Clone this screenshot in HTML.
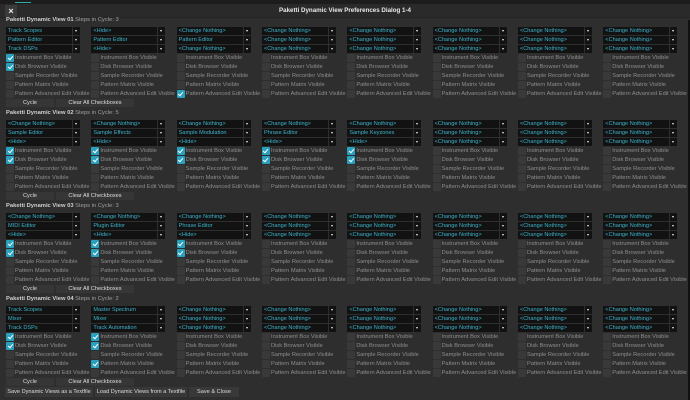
<!DOCTYPE html><html><head><meta charset="utf-8"><style>
*{margin:0;padding:0;box-sizing:border-box}
body{width:690px;height:400px;background:#2e2e2e;font-family:"Liberation Sans",sans-serif;position:relative;overflow:hidden}
.top{position:absolute;left:0;top:0;width:690px;height:4px;background:#1c1c1c}
.top:after{content:"";position:absolute;left:15px;top:2px;width:16px;height:1px;background:#3aa}
.tb{position:absolute;left:0;top:4px;width:690px;height:14px;background:#2a2a2a;border-bottom:1px solid #242424}
.x{position:absolute;left:5px;top:5px;width:12px;height:12px;background:#3a3a3a;color:#eee;font-size:9px;line-height:12px;text-align:center;font-weight:bold}
.ttl{position:absolute;left:0;top:7px;width:690px;text-align:center;color:#e8e8e8;font-size:6.2px;font-weight:bold}
.re{position:absolute;right:0;top:20px;width:2px;height:380px;background:#111}
.s{position:absolute;left:6px;width:684px}
.t{height:11px;line-height:9px;font-size:5.8px;color:#a0a0a0;white-space:nowrap}
.t b{color:#cfcfcf}
.g{display:grid;grid-template-columns:repeat(8,85.33px)}
.col{display:flex;flex-direction:column}
.d{display:block;position:relative;width:74px;height:8px;margin-bottom:1px;font-style:normal;font-size:5.6px;line-height:8px;color:#3cb4cc;white-space:nowrap}
.d:before{content:"";position:absolute;left:0;top:0;width:66px;height:8px;background:#121212}
.d span{position:relative;padding-left:2px}
.d:after{content:"";position:absolute;left:67px;top:0;width:7px;height:8px;background:#121212}
.d em{position:absolute;left:69px;top:3px;width:0;height:0;border-left:1.5px solid transparent;border-right:1.5px solid transparent;border-top:2px solid #eee;z-index:1}
.c{display:block;position:relative;height:8px;margin-bottom:1px;padding-left:9px;font-weight:normal;font-size:5.7px;line-height:8px;color:#8e8e8e;white-space:nowrap}
.c:before{content:"";position:absolute;left:0;top:0;width:8px;height:8px;background:#393939;border-radius:1px}
.c.k:before{background:#2aa0bf}
.c.k:after{content:"";position:absolute;left:2.5px;top:1px;width:2px;height:4px;border:solid #fff;border-width:0 1px 1px 0;transform:rotate(40deg)}
.bt{display:flex;gap:2px}
.bt div{height:8px;background:#363636;color:#ddd;font-size:5.6px;line-height:8px;text-align:center}
.bb{position:absolute;top:387px;left:5px;display:flex;gap:2px}
.bb div{height:10px;background:#383838;color:#ddd;font-size:5.6px;line-height:10px;text-align:center}
</style></head><body>
<div class="top"></div>
<div class="tb"></div>
<div class="x">×</div>
<div class="ttl">Paketti Dynamic View Preferences Dialog 1-4</div>
<div class="re"></div>

<div class="s" style="top:16px">
<div class="t"><b>Paketti Dynamic View 01</b> Steps in Cycle: 3</div>
<div class="g">
<div class="col"><i class="d"><span>Track Scopes</span><em></em></i><i class="d"><span>Pattern Editor</span><em></em></i><i class="d"><span>Track DSPs</span><em></em></i><b class="c k">Instrument Box Visible</b><b class="c k">Disk Browser Visible</b><b class="c">Sample Recorder Visible</b><b class="c">Pattern Matrix Visible</b><b class="c">Pattern Advanced Edit Visible</b></div>
<div class="col"><i class="d"><span>&lt;Hide&gt;</span><em></em></i><i class="d"><span>Pattern Editor</span><em></em></i><i class="d"><span>&lt;Hide&gt;</span><em></em></i><b class="c">Instrument Box Visible</b><b class="c">Disk Browser Visible</b><b class="c">Sample Recorder Visible</b><b class="c">Pattern Matrix Visible</b><b class="c">Pattern Advanced Edit Visible</b></div>
<div class="col"><i class="d"><span>&lt;Change Nothing&gt;</span><em></em></i><i class="d"><span>Pattern Editor</span><em></em></i><i class="d"><span>&lt;Change Nothing&gt;</span><em></em></i><b class="c">Instrument Box Visible</b><b class="c">Disk Browser Visible</b><b class="c">Sample Recorder Visible</b><b class="c">Pattern Matrix Visible</b><b class="c k">Pattern Advanced Edit Visible</b></div>
<div class="col"><i class="d"><span>&lt;Change Nothing&gt;</span><em></em></i><i class="d"><span>&lt;Change Nothing&gt;</span><em></em></i><i class="d"><span>&lt;Change Nothing&gt;</span><em></em></i><b class="c">Instrument Box Visible</b><b class="c">Disk Browser Visible</b><b class="c">Sample Recorder Visible</b><b class="c">Pattern Matrix Visible</b><b class="c">Pattern Advanced Edit Visible</b></div>
<div class="col"><i class="d"><span>&lt;Change Nothing&gt;</span><em></em></i><i class="d"><span>&lt;Change Nothing&gt;</span><em></em></i><i class="d"><span>&lt;Change Nothing&gt;</span><em></em></i><b class="c">Instrument Box Visible</b><b class="c">Disk Browser Visible</b><b class="c">Sample Recorder Visible</b><b class="c">Pattern Matrix Visible</b><b class="c">Pattern Advanced Edit Visible</b></div>
<div class="col"><i class="d"><span>&lt;Change Nothing&gt;</span><em></em></i><i class="d"><span>&lt;Change Nothing&gt;</span><em></em></i><i class="d"><span>&lt;Change Nothing&gt;</span><em></em></i><b class="c">Instrument Box Visible</b><b class="c">Disk Browser Visible</b><b class="c">Sample Recorder Visible</b><b class="c">Pattern Matrix Visible</b><b class="c">Pattern Advanced Edit Visible</b></div>
<div class="col"><i class="d"><span>&lt;Change Nothing&gt;</span><em></em></i><i class="d"><span>&lt;Change Nothing&gt;</span><em></em></i><i class="d"><span>&lt;Change Nothing&gt;</span><em></em></i><b class="c">Instrument Box Visible</b><b class="c">Disk Browser Visible</b><b class="c">Sample Recorder Visible</b><b class="c">Pattern Matrix Visible</b><b class="c">Pattern Advanced Edit Visible</b></div>
<div class="col"><i class="d"><span>&lt;Change Nothing&gt;</span><em></em></i><i class="d"><span>&lt;Change Nothing&gt;</span><em></em></i><i class="d"><span>&lt;Change Nothing&gt;</span><em></em></i><b class="c">Instrument Box Visible</b><b class="c">Disk Browser Visible</b><b class="c">Sample Recorder Visible</b><b class="c">Pattern Matrix Visible</b><b class="c">Pattern Advanced Edit Visible</b></div>
</div>
<div class="bt"><div style="width:48px">Cycle</div><div style="width:78px">Clear All Checkboxes</div></div>
</div>

<div class="s" style="top:109px">
<div class="t"><b>Paketti Dynamic View 02</b> Steps in Cycle: 5</div>
<div class="g">
<div class="col"><i class="d"><span>&lt;Change Nothing&gt;</span><em></em></i><i class="d"><span>Sample Editor</span><em></em></i><i class="d"><span>&lt;Hide&gt;</span><em></em></i><b class="c k">Instrument Box Visible</b><b class="c k">Disk Browser Visible</b><b class="c">Sample Recorder Visible</b><b class="c">Pattern Matrix Visible</b><b class="c">Pattern Advanced Edit Visible</b></div>
<div class="col"><i class="d"><span>&lt;Change Nothing&gt;</span><em></em></i><i class="d"><span>Sample Effects</span><em></em></i><i class="d"><span>&lt;Hide&gt;</span><em></em></i><b class="c k">Instrument Box Visible</b><b class="c k">Disk Browser Visible</b><b class="c">Sample Recorder Visible</b><b class="c">Pattern Matrix Visible</b><b class="c">Pattern Advanced Edit Visible</b></div>
<div class="col"><i class="d"><span>&lt;Change Nothing&gt;</span><em></em></i><i class="d"><span>Sample Modulation</span><em></em></i><i class="d"><span>&lt;Hide&gt;</span><em></em></i><b class="c k">Instrument Box Visible</b><b class="c k">Disk Browser Visible</b><b class="c">Sample Recorder Visible</b><b class="c">Pattern Matrix Visible</b><b class="c">Pattern Advanced Edit Visible</b></div>
<div class="col"><i class="d"><span>&lt;Change Nothing&gt;</span><em></em></i><i class="d"><span>Phrase Editor</span><em></em></i><i class="d"><span>&lt;Hide&gt;</span><em></em></i><b class="c k">Instrument Box Visible</b><b class="c k">Disk Browser Visible</b><b class="c">Sample Recorder Visible</b><b class="c">Pattern Matrix Visible</b><b class="c">Pattern Advanced Edit Visible</b></div>
<div class="col"><i class="d"><span>&lt;Change Nothing&gt;</span><em></em></i><i class="d"><span>Sample Keyzones</span><em></em></i><i class="d"><span>&lt;Hide&gt;</span><em></em></i><b class="c k">Instrument Box Visible</b><b class="c k">Disk Browser Visible</b><b class="c">Sample Recorder Visible</b><b class="c">Pattern Matrix Visible</b><b class="c">Pattern Advanced Edit Visible</b></div>
<div class="col"><i class="d"><span>&lt;Change Nothing&gt;</span><em></em></i><i class="d"><span>&lt;Change Nothing&gt;</span><em></em></i><i class="d"><span>&lt;Change Nothing&gt;</span><em></em></i><b class="c">Instrument Box Visible</b><b class="c">Disk Browser Visible</b><b class="c">Sample Recorder Visible</b><b class="c">Pattern Matrix Visible</b><b class="c">Pattern Advanced Edit Visible</b></div>
<div class="col"><i class="d"><span>&lt;Change Nothing&gt;</span><em></em></i><i class="d"><span>&lt;Change Nothing&gt;</span><em></em></i><i class="d"><span>&lt;Change Nothing&gt;</span><em></em></i><b class="c">Instrument Box Visible</b><b class="c">Disk Browser Visible</b><b class="c">Sample Recorder Visible</b><b class="c">Pattern Matrix Visible</b><b class="c">Pattern Advanced Edit Visible</b></div>
<div class="col"><i class="d"><span>&lt;Change Nothing&gt;</span><em></em></i><i class="d"><span>&lt;Change Nothing&gt;</span><em></em></i><i class="d"><span>&lt;Change Nothing&gt;</span><em></em></i><b class="c">Instrument Box Visible</b><b class="c">Disk Browser Visible</b><b class="c">Sample Recorder Visible</b><b class="c">Pattern Matrix Visible</b><b class="c">Pattern Advanced Edit Visible</b></div>
</div>
<div class="bt"><div style="width:48px">Cycle</div><div style="width:78px">Clear All Checkboxes</div></div>
</div>

<div class="s" style="top:202px">
<div class="t"><b>Paketti Dynamic View 03</b> Steps in Cycle: 3</div>
<div class="g">
<div class="col"><i class="d"><span>&lt;Change Nothing&gt;</span><em></em></i><i class="d"><span>MIDI Editor</span><em></em></i><i class="d"><span>&lt;Hide&gt;</span><em></em></i><b class="c k">Instrument Box Visible</b><b class="c k">Disk Browser Visible</b><b class="c">Sample Recorder Visible</b><b class="c">Pattern Matrix Visible</b><b class="c">Pattern Advanced Edit Visible</b></div>
<div class="col"><i class="d"><span>&lt;Change Nothing&gt;</span><em></em></i><i class="d"><span>Plugin Editor</span><em></em></i><i class="d"><span>&lt;Hide&gt;</span><em></em></i><b class="c k">Instrument Box Visible</b><b class="c k">Disk Browser Visible</b><b class="c">Sample Recorder Visible</b><b class="c">Pattern Matrix Visible</b><b class="c">Pattern Advanced Edit Visible</b></div>
<div class="col"><i class="d"><span>&lt;Change Nothing&gt;</span><em></em></i><i class="d"><span>Phrase Editor</span><em></em></i><i class="d"><span>&lt;Hide&gt;</span><em></em></i><b class="c k">Instrument Box Visible</b><b class="c k">Disk Browser Visible</b><b class="c">Sample Recorder Visible</b><b class="c">Pattern Matrix Visible</b><b class="c">Pattern Advanced Edit Visible</b></div>
<div class="col"><i class="d"><span>&lt;Change Nothing&gt;</span><em></em></i><i class="d"><span>&lt;Change Nothing&gt;</span><em></em></i><i class="d"><span>&lt;Change Nothing&gt;</span><em></em></i><b class="c">Instrument Box Visible</b><b class="c">Disk Browser Visible</b><b class="c">Sample Recorder Visible</b><b class="c">Pattern Matrix Visible</b><b class="c">Pattern Advanced Edit Visible</b></div>
<div class="col"><i class="d"><span>&lt;Change Nothing&gt;</span><em></em></i><i class="d"><span>&lt;Change Nothing&gt;</span><em></em></i><i class="d"><span>&lt;Change Nothing&gt;</span><em></em></i><b class="c">Instrument Box Visible</b><b class="c">Disk Browser Visible</b><b class="c">Sample Recorder Visible</b><b class="c">Pattern Matrix Visible</b><b class="c">Pattern Advanced Edit Visible</b></div>
<div class="col"><i class="d"><span>&lt;Change Nothing&gt;</span><em></em></i><i class="d"><span>&lt;Change Nothing&gt;</span><em></em></i><i class="d"><span>&lt;Change Nothing&gt;</span><em></em></i><b class="c">Instrument Box Visible</b><b class="c">Disk Browser Visible</b><b class="c">Sample Recorder Visible</b><b class="c">Pattern Matrix Visible</b><b class="c">Pattern Advanced Edit Visible</b></div>
<div class="col"><i class="d"><span>&lt;Change Nothing&gt;</span><em></em></i><i class="d"><span>&lt;Change Nothing&gt;</span><em></em></i><i class="d"><span>&lt;Change Nothing&gt;</span><em></em></i><b class="c">Instrument Box Visible</b><b class="c">Disk Browser Visible</b><b class="c">Sample Recorder Visible</b><b class="c">Pattern Matrix Visible</b><b class="c">Pattern Advanced Edit Visible</b></div>
<div class="col"><i class="d"><span>&lt;Change Nothing&gt;</span><em></em></i><i class="d"><span>&lt;Change Nothing&gt;</span><em></em></i><i class="d"><span>&lt;Change Nothing&gt;</span><em></em></i><b class="c">Instrument Box Visible</b><b class="c">Disk Browser Visible</b><b class="c">Sample Recorder Visible</b><b class="c">Pattern Matrix Visible</b><b class="c">Pattern Advanced Edit Visible</b></div>
</div>
<div class="bt"><div style="width:48px">Cycle</div><div style="width:78px">Clear All Checkboxes</div></div>
</div>

<div class="s" style="top:295px">
<div class="t"><b>Paketti Dynamic View 04</b> Steps in Cycle: 2</div>
<div class="g">
<div class="col"><i class="d"><span>Track Scopes</span><em></em></i><i class="d"><span>Mixer</span><em></em></i><i class="d"><span>Track DSPs</span><em></em></i><b class="c k">Instrument Box Visible</b><b class="c k">Disk Browser Visible</b><b class="c">Sample Recorder Visible</b><b class="c">Pattern Matrix Visible</b><b class="c">Pattern Advanced Edit Visible</b></div>
<div class="col"><i class="d"><span>Master Spectrum</span><em></em></i><i class="d"><span>Mixer</span><em></em></i><i class="d"><span>Track Automation</span><em></em></i><b class="c k">Instrument Box Visible</b><b class="c k">Disk Browser Visible</b><b class="c">Sample Recorder Visible</b><b class="c k">Pattern Matrix Visible</b><b class="c">Pattern Advanced Edit Visible</b></div>
<div class="col"><i class="d"><span>&lt;Change Nothing&gt;</span><em></em></i><i class="d"><span>&lt;Change Nothing&gt;</span><em></em></i><i class="d"><span>&lt;Change Nothing&gt;</span><em></em></i><b class="c">Instrument Box Visible</b><b class="c">Disk Browser Visible</b><b class="c">Sample Recorder Visible</b><b class="c">Pattern Matrix Visible</b><b class="c">Pattern Advanced Edit Visible</b></div>
<div class="col"><i class="d"><span>&lt;Change Nothing&gt;</span><em></em></i><i class="d"><span>&lt;Change Nothing&gt;</span><em></em></i><i class="d"><span>&lt;Change Nothing&gt;</span><em></em></i><b class="c">Instrument Box Visible</b><b class="c">Disk Browser Visible</b><b class="c">Sample Recorder Visible</b><b class="c">Pattern Matrix Visible</b><b class="c">Pattern Advanced Edit Visible</b></div>
<div class="col"><i class="d"><span>&lt;Change Nothing&gt;</span><em></em></i><i class="d"><span>&lt;Change Nothing&gt;</span><em></em></i><i class="d"><span>&lt;Change Nothing&gt;</span><em></em></i><b class="c">Instrument Box Visible</b><b class="c">Disk Browser Visible</b><b class="c">Sample Recorder Visible</b><b class="c">Pattern Matrix Visible</b><b class="c">Pattern Advanced Edit Visible</b></div>
<div class="col"><i class="d"><span>&lt;Change Nothing&gt;</span><em></em></i><i class="d"><span>&lt;Change Nothing&gt;</span><em></em></i><i class="d"><span>&lt;Change Nothing&gt;</span><em></em></i><b class="c">Instrument Box Visible</b><b class="c">Disk Browser Visible</b><b class="c">Sample Recorder Visible</b><b class="c">Pattern Matrix Visible</b><b class="c">Pattern Advanced Edit Visible</b></div>
<div class="col"><i class="d"><span>&lt;Change Nothing&gt;</span><em></em></i><i class="d"><span>&lt;Change Nothing&gt;</span><em></em></i><i class="d"><span>&lt;Change Nothing&gt;</span><em></em></i><b class="c">Instrument Box Visible</b><b class="c">Disk Browser Visible</b><b class="c">Sample Recorder Visible</b><b class="c">Pattern Matrix Visible</b><b class="c">Pattern Advanced Edit Visible</b></div>
<div class="col"><i class="d"><span>&lt;Change Nothing&gt;</span><em></em></i><i class="d"><span>&lt;Change Nothing&gt;</span><em></em></i><i class="d"><span>&lt;Change Nothing&gt;</span><em></em></i><b class="c">Instrument Box Visible</b><b class="c">Disk Browser Visible</b><b class="c">Sample Recorder Visible</b><b class="c">Pattern Matrix Visible</b><b class="c">Pattern Advanced Edit Visible</b></div>
</div>
<div class="bt"><div style="width:48px">Cycle</div><div style="width:78px">Clear All Checkboxes</div></div>
</div>

<div class="bb"><div style="width:88px">Save Dynamic Views as a Textfile</div><div style="width:92px">Load Dynamic Views from a Textfile</div><div style="width:50px">Save &amp; Close</div></div>
</body></html>
